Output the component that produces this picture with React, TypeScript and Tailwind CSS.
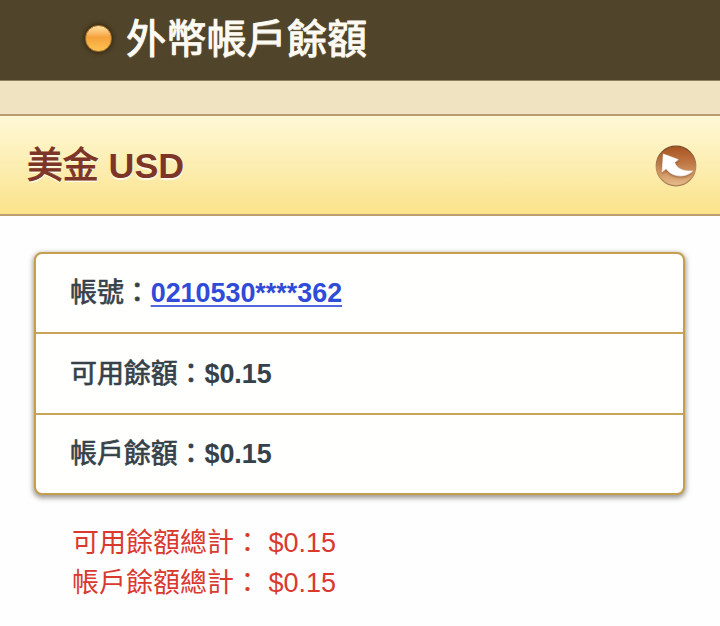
const rows = [
  { label: '帳號', value: '0210530****362', link: true },
  { label: '可用餘額', value: '$0.15' },
  { label: '帳戶餘額', value: '$0.15' },
];

const totals = [
  { label: '可用餘額總計', value: '$0.15' },
  { label: '帳戶餘額總計', value: '$0.15' },
];

function BackIcon() {
  return (
    <svg viewBox="0 0 42 42" className="w-[42px] h-[42px]" aria-hidden="true">
      <defs>
        <linearGradient id="back-fill" x1="0" y1="0" x2="0" y2="1">
          <stop offset="0" stopColor="#a9531f" />
          <stop offset="0.45" stopColor="#c07a48" />
          <stop offset="1" stopColor="#e6bd8c" />
        </linearGradient>
        <linearGradient id="back-ring" x1="0" y1="0" x2="0" y2="1">
          <stop offset="0" stopColor="#75492a" />
          <stop offset="0.6" stopColor="#c08d5d" />
          <stop offset="1" stopColor="#a98052" />
        </linearGradient>
        <filter id="back-shadow" x="-20%" y="-20%" width="140%" height="150%">
          <feDropShadow dx="0" dy="1.5" stdDeviation="1" floodColor="#7a3c17" floodOpacity="0.6" />
        </filter>
      </defs>
      <circle cx="21" cy="21" r="19.8" fill="url(#back-fill)" stroke="url(#back-ring)" strokeWidth="1.2" />
      <path
        d="M8.3 9 L23.2 14.6 L19.5 17.4 C21.5 23 27.5 26.8 37.5 26 C31 33 17 32.5 11.2 23.6 L7.2 26.8 Z"
        fill="#ffffff"
        stroke="#ffffff"
        strokeWidth="0.6"
        strokeLinejoin="round"
        filter="url(#back-shadow)"
      />
    </svg>
  );
}

export default function App() {
  return (
    <div
      lang="zh-TW"
      className="w-full h-[626px] overflow-hidden bg-[#fefefe] font-['Liberation_Sans','Noto_Sans_CJK_TC',sans-serif]"
    >
      {/* Page title */}
      <header className="flex items-center h-20 pl-[85px] bg-[#50442a]">
        <span className="w-[27px] h-[27px] mr-[14px] -mt-[3px] rounded-full bg-linear-to-b from-[#ffe1a0] via-[#f5a23a] via-45% to-[#fdc252] border border-[#a8722c] shadow-[0_0_4px_1px_#33270f]" />
        <h1 className="text-[40.2px] leading-none text-[#fcfaf2] font-normal whitespace-nowrap [-webkit-text-stroke:0.9px_#fcfaf2] [text-shadow:0_1px_1px_#c9bea5]">
          外幣帳戶餘額
        </h1>
      </header>
      <div className="h-[34px] bg-[#f0e3c1] border-t border-[#8d7e5c]" />

      {/* Currency bar */}
      <section className="flex items-center justify-between h-[102px] pt-[2px] pl-[27px] pr-[23px] bg-linear-to-b from-[#fef8d6] to-[#fbe38a] border-y-2 border-[#b99c70]">
        <h2 className="pt-px text-[35.8px] leading-none font-bold text-[#7d3528] whitespace-nowrap [text-shadow:0_2px_1px_#fffbe8]">
          <span className="font-normal [-webkit-text-stroke:1px_#7d3528]">美金</span> USD
        </h2>
        <button type="button" aria-label="返回">
          <BackIcon />
        </button>
      </section>

      {/* Account card */}
      <div className="mt-9 ml-[34px] w-[651px] h-[243px] flex flex-col rounded-lg border-2 border-[#c49f4e] bg-[#fffffd] divide-y-2 divide-[#c9a458] shadow-[0_2px_5px_1px_rgba(60,50,40,0.5)]">
        {rows.map((row) => (
          <div key={row.label} className="flex flex-1 items-center pt-px pl-[34px] text-[26.9px] leading-none font-bold text-[#36414a] whitespace-nowrap">
            <span className="font-normal [-webkit-text-stroke:0.7px_#36414a]">{row.label}：</span>
            {row.link ? (
              <a href="#" className="text-[#304bd8] underline decoration-2 underline-offset-[3px] decoration-[#5268dc]">
                {row.value}
              </a>
            ) : (
              <span>{row.value}</span>
            )}
          </div>
        ))}
      </div>

      {/* Totals */}
      <div className="mt-7 pl-[72px] text-[27px] leading-10 text-[#d9392f] whitespace-nowrap">
        {totals.map((total) => (
          <p key={total.label}>
            {total.label}： {total.value}
          </p>
        ))}
      </div>
    </div>
  );
}
